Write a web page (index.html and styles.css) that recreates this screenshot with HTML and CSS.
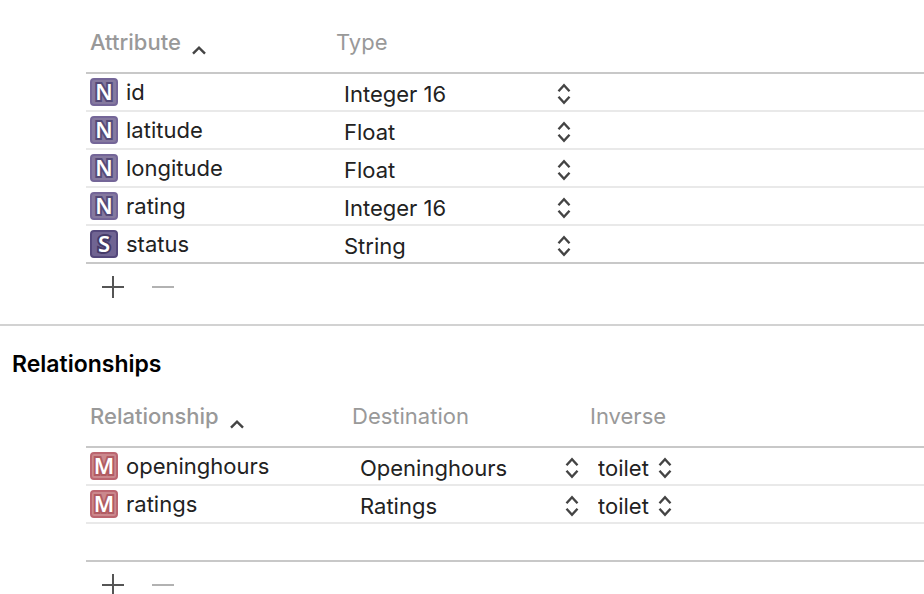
FILE: index.html
```html
<!DOCTYPE html>
<html lang="en">
<head>
<meta charset="utf-8">
<title>Entity editor</title>
<link rel="stylesheet" href="styles.css">
</head>
<body>
<svg class="defs" aria-hidden="true">
  <symbol id="updown" viewBox="0 0 14 22"><path d="M1.500 8.200 7 2.200l5.500 6M1.500 13.800 7 19.800l5.500-6"/></symbol>
  <symbol id="sort" viewBox="0 0 14 10"><path d="M1 8.600 7 2.600l6 6"/></symbol>
  <symbol id="plus" viewBox="0 0 22 22"><path d="M0 11h22M11 0v22"/></symbol>
  <symbol id="minus" viewBox="0 0 22 22"><path d="M0 11h22"/></symbol>
</svg>
<main>
  <section class="panel" aria-label="Attributes">
    <div class="list">
      <table>
        <colgroup><col class="col-attribute"><col></colgroup>
        <thead>
          <tr>
            <th class="sorted" aria-sort="ascending">Attribute<svg class="sort"><use href="#sort"/></svg></th>
            <th>Type</th>
          </tr>
        </thead>
        <tbody>
          <tr>
            <td><div class="name"><svg class="badge number" viewBox="0 0 28 28"><rect x="1" y="1" width="26" height="26" rx="3"/><text x="14" y="22">N</text></svg><span id="a1">id</span></div></td>
            <td><div class="picker type"><select aria-labelledby="a1"><option>Integer 16</option><option>Float</option><option>String</option></select><svg><use href="#updown"/></svg></div></td>
          </tr>
          <tr>
            <td><div class="name"><svg class="badge number" viewBox="0 0 28 28"><rect x="1" y="1" width="26" height="26" rx="3"/><text x="14" y="22">N</text></svg><span id="a2">latitude</span></div></td>
            <td><div class="picker type"><select aria-labelledby="a2"><option>Float</option><option>Integer 16</option><option>String</option></select><svg><use href="#updown"/></svg></div></td>
          </tr>
          <tr>
            <td><div class="name"><svg class="badge number" viewBox="0 0 28 28"><rect x="1" y="1" width="26" height="26" rx="3"/><text x="14" y="22">N</text></svg><span id="a3">longitude</span></div></td>
            <td><div class="picker type"><select aria-labelledby="a3"><option>Float</option><option>Integer 16</option><option>String</option></select><svg><use href="#updown"/></svg></div></td>
          </tr>
          <tr>
            <td><div class="name"><svg class="badge number" viewBox="0 0 28 28"><rect x="1" y="1" width="26" height="26" rx="3"/><text x="14" y="22">N</text></svg><span id="a4">rating</span></div></td>
            <td><div class="picker type"><select aria-labelledby="a4"><option>Integer 16</option><option>Float</option><option>String</option></select><svg><use href="#updown"/></svg></div></td>
          </tr>
          <tr>
            <td><div class="name"><svg class="badge string" viewBox="0 0 28 28"><rect x="1" y="1" width="26" height="26" rx="3"/><text x="14" y="22">S</text></svg><span id="a5">status</span></div></td>
            <td><div class="picker type"><select aria-labelledby="a5"><option>String</option><option>Integer 16</option><option>Float</option></select><svg><use href="#updown"/></svg></div></td>
          </tr>
        </tbody>
      </table>
      <div class="actions">
        <button type="button" aria-label="Add attribute"><svg><use href="#plus"/></svg></button>
        <button type="button" aria-label="Remove attribute" disabled><svg><use href="#minus"/></svg></button>
      </div>
    </div>
  </section>
  <section class="panel">
    <h2>Relationships</h2>
    <div class="list">
      <table>
        <colgroup><col class="col-relationship"><col class="col-destination"><col></colgroup>
        <thead>
          <tr>
            <th class="sorted" aria-sort="ascending">Relationship<svg class="sort"><use href="#sort"/></svg></th>
            <th>Destination</th>
            <th>Inverse</th>
          </tr>
        </thead>
        <tbody>
          <tr>
            <td><div class="name"><svg class="badge many" viewBox="0 0 28 28"><rect x="1" y="1" width="26" height="26" rx="3"/><text x="14" y="22">M</text></svg><span id="r1">openinghours</span></div></td>
            <td><div class="picker destination"><select aria-labelledby="r1"><option>Openinghours</option><option>Ratings</option></select><svg><use href="#updown"/></svg></div></td>
            <td><div class="picker inverse"><select aria-label="Inverse of openinghours"><option>toilet</option></select><svg><use href="#updown"/></svg></div></td>
          </tr>
          <tr>
            <td><div class="name"><svg class="badge many" viewBox="0 0 28 28"><rect x="1" y="1" width="26" height="26" rx="3"/><text x="14" y="22">M</text></svg><span id="r2">ratings</span></div></td>
            <td><div class="picker destination"><select aria-labelledby="r2"><option>Ratings</option><option>Openinghours</option></select><svg><use href="#updown"/></svg></div></td>
            <td><div class="picker inverse"><select aria-label="Inverse of ratings"><option>toilet</option></select><svg><use href="#updown"/></svg></div></td>
          </tr>
          <tr><td></td><td></td><td></td></tr>
        </tbody>
      </table>
      <div class="actions">
        <button type="button" aria-label="Add relationship"><svg><use href="#plus"/></svg></button>
        <button type="button" aria-label="Remove relationship" disabled><svg><use href="#minus"/></svg></button>
      </div>
    </div>
  </section>
</main>
</body>
</html>
```
FILE: styles.css
```css
* { box-sizing: border-box; }

body {
  margin: 0;
  background: #fff;
  color: #222;
  font: 22px/32px Inter, "Liberation Sans", sans-serif;
}

.defs { position: absolute; width: 0; height: 0; }

main { padding-top: 6px; }

.panel + .panel {
  border-top: 2px solid #d2d2d2;
  padding-top: 22px;
}

h2 {
  margin: 0;
  padding-left: 12px;
  color: #000;
  font-size: 23px;
  line-height: 32px;
  font-weight: 600;
}

.list { padding-left: 86px; }

table {
  width: 100%;
  table-layout: fixed;
  border-collapse: separate;
  border-spacing: 0;
}

.col-attribute { width: 246px; }
.col-relationship { width: 262px; }
.col-destination { width: 238px; }

th {
  padding: 20px 4px 14px;
  border-bottom: 2px solid #c8c8c8;
  color: #999;
  font-weight: 400;
  text-align: left;
}

th.sorted { font-weight: 500; }

td {
  height: 38px;
  padding: 0 4px;
  border-bottom: 2px solid #e9e9e9;
}

tr:last-child td { border-bottom-color: #c8c8c8; }

svg {
  display: block;
  fill: none;
  stroke: #444;
  stroke-width: 2;
}

.sort {
  display: inline-block;
  width: 14px;
  height: 10px;
  margin-left: 11px;
  vertical-align: -5px;
  stroke-width: 2.4;
}

.name {
  display: flex;
  align-items: center;
  gap: 8px;
}

.badge {
  width: 28px;
  height: 28px;
  overflow: visible;
}

.badge text {
  fill: #fff;
  stroke-width: 4;
  paint-order: stroke;
  font: 600 22px/28px "Noto Sans", "Open Sans", sans-serif;
  text-anchor: middle;
}

.number rect { fill: #85799f; stroke: #746698; }
.number text { stroke: #544a78; }
.string rect { fill: #706492; stroke: #54487b; }
.string text { stroke: #453a68; }
.many rect { fill: #cb888d; stroke: #bb6670; }
.many text { stroke: #b15c63; }

.picker {
  display: grid;
  align-items: center;
  padding: 4px 0 0 8px;
}

.picker select,
.picker svg { grid-area: 1 / 1; }

.picker select {
  width: 100%;
  height: 32px;
  margin: 0;
  padding: 0;
  border: 0;
  background: none;
  color: inherit;
  font: inherit;
  appearance: none;
}

.picker svg {
  width: 14px;
  height: 22px;
  justify-self: end;
  pointer-events: none;
  stroke-width: 2.4;
}

.type { width: 235px; }
.destination { width: 227px; }
.inverse { width: 82px; }

.actions {
  display: flex;
  gap: 28px;
  padding: 12px 16px 26px;
}

.actions button {
  width: 22px;
  height: 22px;
  padding: 0;
  border: 0;
  background: none;
}

.actions svg { width: 22px; height: 22px; stroke: #555; }
.actions button:disabled svg { stroke: #b2b2b2; }
```
